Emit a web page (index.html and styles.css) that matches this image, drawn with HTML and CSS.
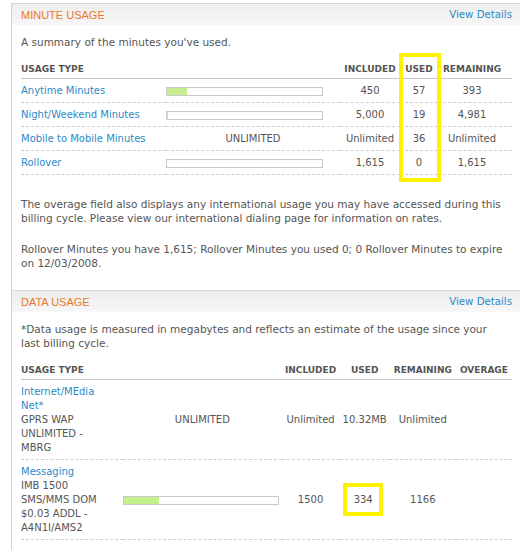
FILE: index.html
```html
<!DOCTYPE html>
<html>
<head>
<meta charset="utf-8">
<link rel="stylesheet" href="styles.css">
</head>
<body>
<div class="panel">
  <section class="section">
    <div class="sec-head">
      <span class="sec-title">MINUTE USAGE</span>
      <a class="link">View Details</a>
    </div>
    <div class="sec-body">
      <p class="intro">A summary of the minutes you've used.</p>
      <div class="table-wrap">
        <table class="usage minutes">
          <colgroup>
            <col class="c-type"><col class="c-bar"><col class="c-inc"><col class="c-used"><col class="c-rem">
          </colgroup>
          <thead>
            <tr><th class="left">USAGE TYPE</th><th></th><th>INCLUDED</th><th>USED</th><th class="rem">REMAINING</th></tr>
          </thead>
          <tbody>
            <tr><td class="left"><a class="link">Anytime Minutes</a></td><td class="barcell"><div class="bar"><div class="fill" style="width:12.7%"></div></div></td><td>450</td><td>57</td><td class="rem">393</td></tr>
            <tr><td class="left"><a class="link">Night/Weekend Minutes</a></td><td class="barcell"><div class="bar"><div class="fill" style="width:0.4%"></div></div></td><td>5,000</td><td>19</td><td class="rem">4,981</td></tr>
            <tr><td class="left"><a class="link">Mobile to Mobile Minutes</a></td><td>UNLIMITED</td><td>Unlimited</td><td>36</td><td class="rem">Unlimited</td></tr>
            <tr><td class="left"><a class="link">Rollover</a></td><td class="barcell"><div class="bar"><div class="fill" style="width:0%"></div></div></td><td>1,615</td><td>0</td><td class="rem">1,615</td></tr>
          </tbody>
        </table>
        <div class="highlight hl-used"></div>
      </div>
      <p class="note first">The overage field also displays any international usage you may have accessed during this billing cycle. Please view our international dialing page for information on rates.</p>
      <p class="note last">Rollover Minutes you have 1,615; Rollover Minutes you used 0; 0 Rollover Minutes to expire on 12/03/2008.</p>
    </div>
  </section>
  <section class="section data">
    <div class="sec-head">
      <span class="sec-title">DATA USAGE</span>
      <a class="link">View Details</a>
    </div>
    <div class="sec-body">
      <p class="intro narrow">*Data usage is measured in megabytes and reflects an estimate of the usage since your last billing cycle.</p>
      <div class="table-wrap">
        <table class="usage datatbl">
          <colgroup>
            <col class="d-type"><col class="d-bar"><col class="d-inc"><col class="d-used"><col class="d-rem"><col class="d-over">
          </colgroup>
          <thead>
            <tr><th class="left">USAGE TYPE</th><th></th><th>INCLUDED</th><th>USED</th><th>REMAINING</th><th>OVERAGE</th></tr>
          </thead>
          <tbody>
            <tr><td class="left typecell"><a class="link">Internet/MEdia Net*</a><br>GPRS WAP UNLIMITED - MBRG</td><td>UNLIMITED</td><td>Unlimited</td><td>10.32MB</td><td>Unlimited</td><td></td></tr>
            <tr><td class="left typecell"><a class="link">Messaging</a><br>IMB 1500 SMS/MMS DOM $0.03 ADDL - A4N1I/AMS2</td><td class="barcell"><div class="bar"><div class="fill" style="width:22.3%"></div></div></td><td>1500</td><td><span class="boxed">334</span></td><td>1166</td><td></td></tr>
          </tbody>
        </table>
      </div>
    </div>
  </section>
</div>
</body>
</html>
```
FILE: styles.css
```css
html, body {
  margin: 0;
  padding: 0;
  background: #fff;
  overflow: hidden;
}
body {
  font-family: "DejaVu Sans", Verdana, sans-serif;
  font-size: 10px;
  line-height: 14px;
  color: #555;
}
.panel {
  margin: 3px 0 0 11px;
  border-left: 1px solid #cfcfcf;
  border-top: 1px solid #d4d4d4;
  height: 560px;
}
.section.data {
  border-top: 1px solid #d4d4d4;
}
.sec-head {
  height: 21px;
  display: flex;
  align-items: center;
  justify-content: space-between;
  padding: 0 8px 0 9px;
  background: linear-gradient(#ededed, #f7f7f7);
}
.sec-title {
  font-family: "Liberation Sans", Arial, sans-serif;
  font-size: 11px;
  color: #e8782a;
}
.link {
  color: #2b8ac6;
  text-decoration: none;
}
.sec-head .link {
  font-size: 10.2px;
  padding-top: 1px;
}
.sec-body {
  padding: 10px 8px 0 9px;
}
.intro, .note {
  font-size: 10.5px;
}
.intro {
  margin: 0 0 11px;
}
.intro.narrow {
  max-width: 474px;
}
.table-wrap {
  position: relative;
}
.usage {
  width: 100%;
  border-collapse: collapse;
  table-layout: fixed;
}
.usage th {
  font-size: 9px;
  font-weight: bold;
  color: #555;
  padding: 2px 0 2px;
  text-align: center;
  border-bottom: 1px solid #c8c8c8;
  white-space: nowrap;
}
.usage td {
  text-align: center;
  padding: 5px 0 4px;
  border-bottom: 1px dashed #cfcfcf;
  vertical-align: middle;
}
.usage .left {
  text-align: left;
}
.usage td.typecell {
  padding-right: 12px;
}
.minutes td.rem, .minutes th.rem {
  padding-right: 6px;
}
.c-type { width: 145px; }
.c-bar { width: 174px; }
.c-inc { width: 60px; }
.c-used { width: 38px; }
.c-rem { width: 74px; }
.d-type { width: 102px; }
.d-bar { width: 158px; }
.d-inc { width: 58px; }
.d-used { width: 50px; }
.d-rem { width: 66px; }
.d-over { width: 56px; }
.usage td.barcell {
  text-align: left;
}
.bar {
  height: 7px;
  border: 1px solid #c9c9c9;
  background: #fff;
  width: 155px;
}
.fill {
  height: 100%;
  background: #c6ef8e;
}
.datatbl .bar {
  width: 154px;
}
.note {
  margin: 0;
}
.note.first {
  margin-top: 22px;
  margin-bottom: 17px;
}
.note.last {
  margin-bottom: 20px;
}
.highlight {
  position: absolute;
  border: 4px solid #fff200;
  box-sizing: border-box;
}
.hl-used {
  top: -7px;
  left: 378px;
  width: 42px;
  height: 129px;
}
.boxed {
  display: inline-block;
  width: 40px;
  height: 33px;
  line-height: 25px;
  box-sizing: border-box;
  border: 4px solid #fff200;
  margin: -10px 0 -9px -3px;
  vertical-align: middle;
}
```
